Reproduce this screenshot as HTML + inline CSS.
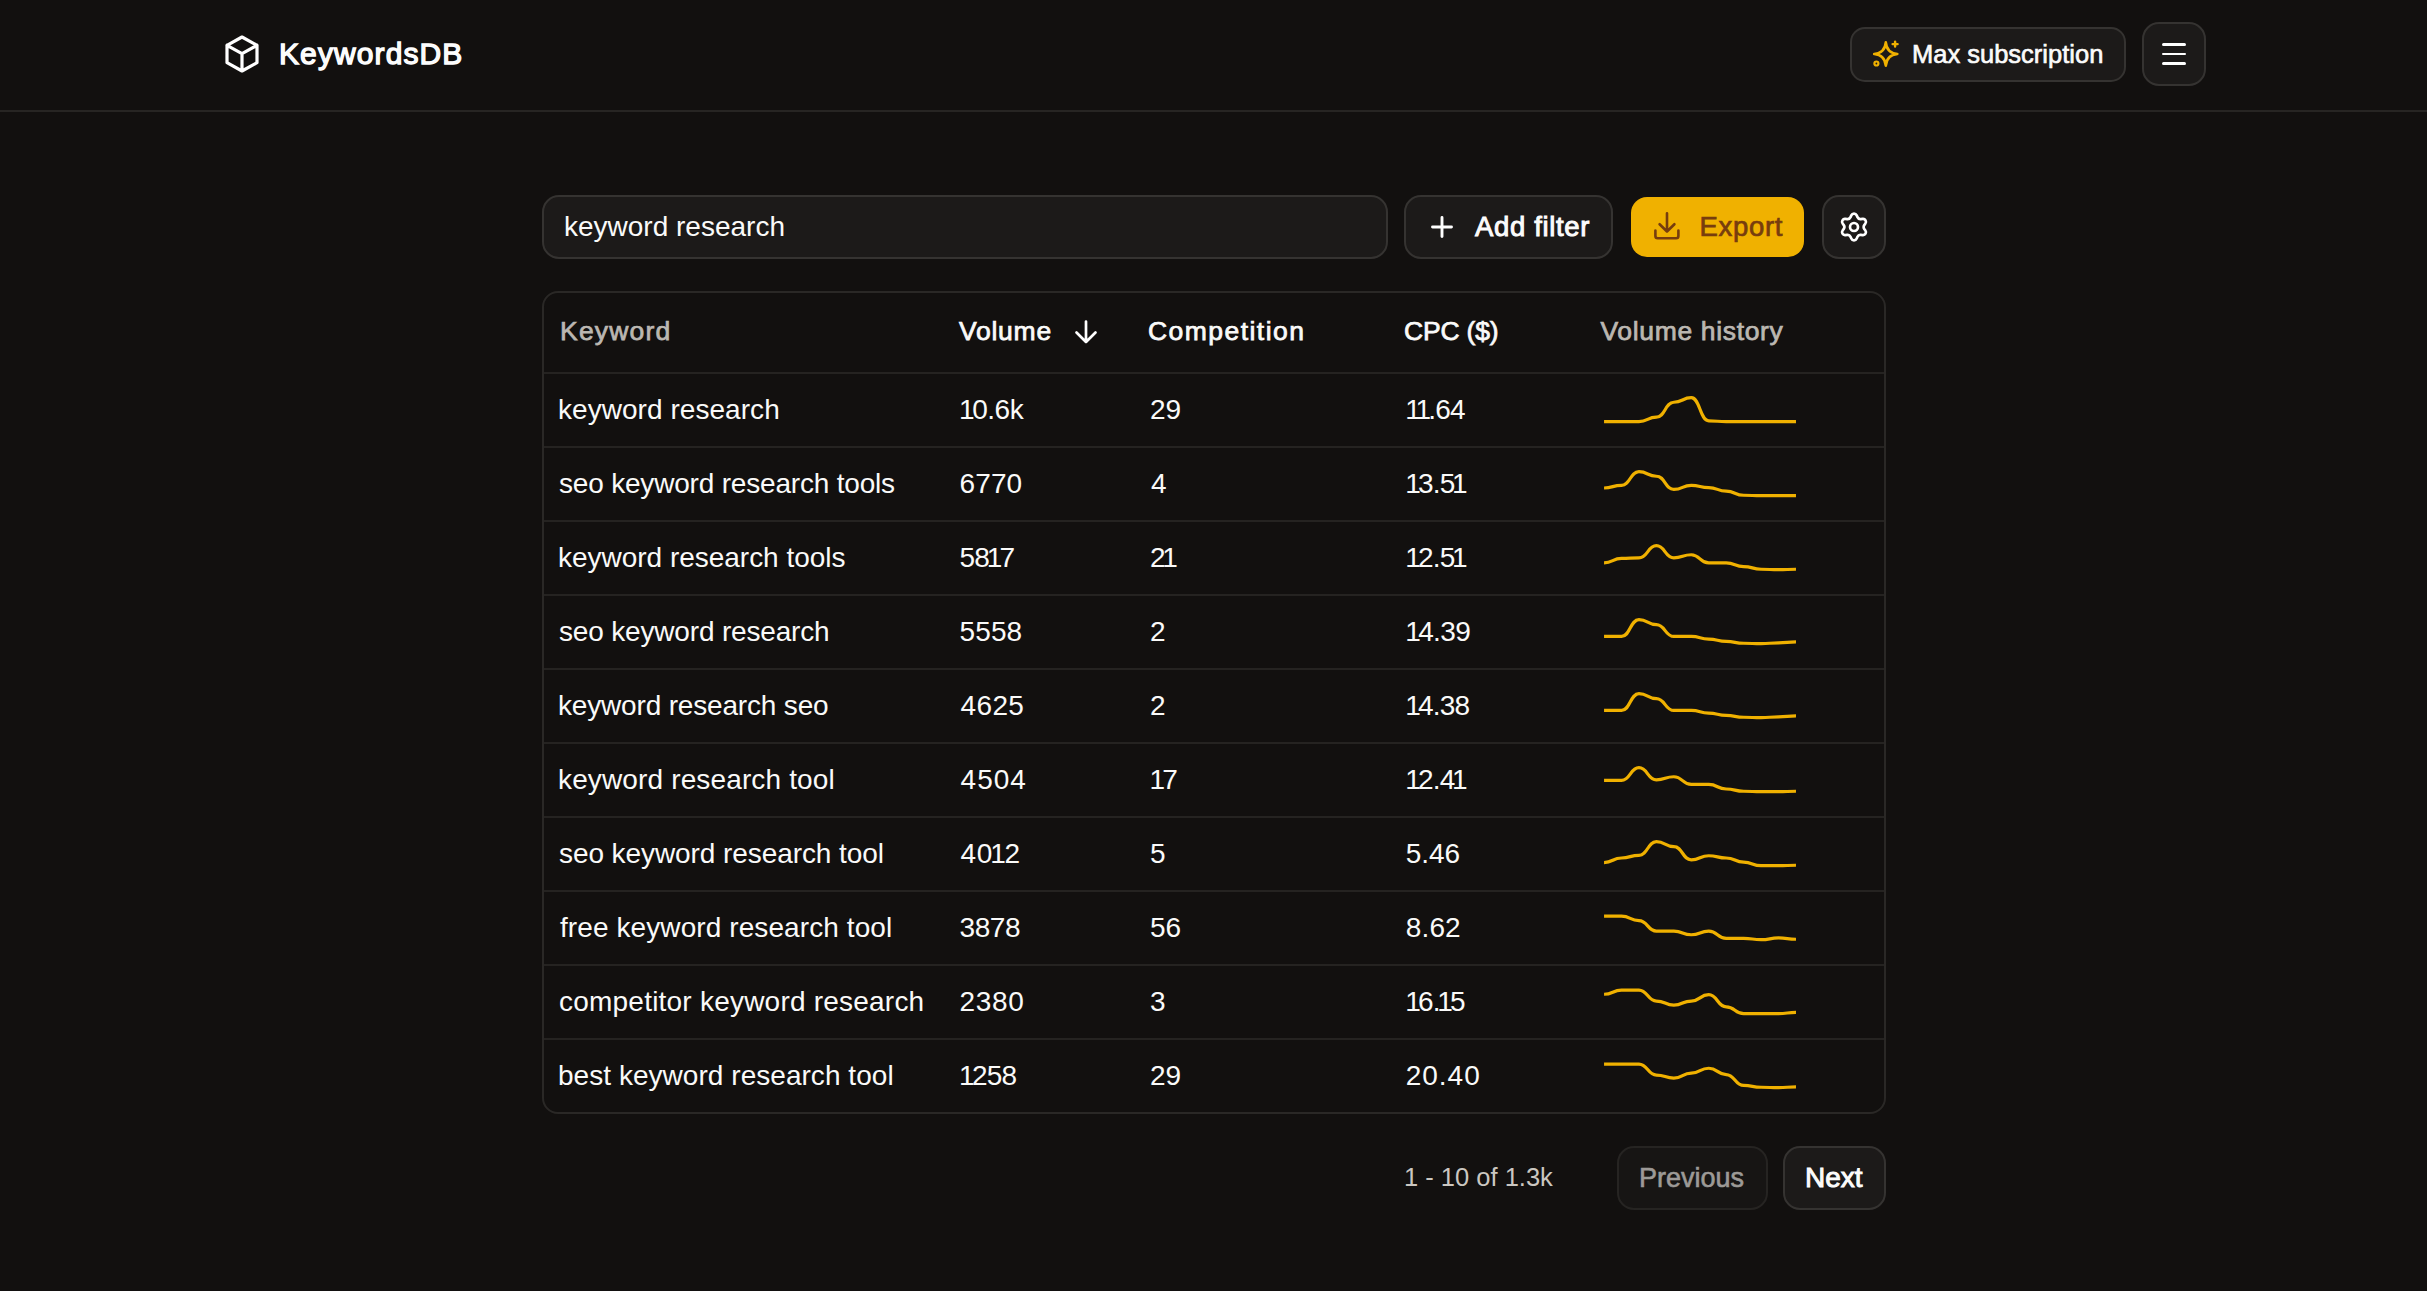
<!DOCTYPE html>
<html><head><meta charset="utf-8"><style>
*{box-sizing:border-box;margin:0;padding:0}
html,body{width:2427px;height:1291px;overflow:hidden;background:#12100f;}
body{font-family:"Liberation Sans",sans-serif;color:#fafaf9;position:relative}
.a{position:absolute;white-space:nowrap}
.btn{position:absolute;background:#1c1a19;border:2px solid #353331;border-radius:16px}
.hdr{font-size:26.5px;line-height:1;-webkit-text-stroke:0.75px currentColor}
.cell{font-size:28px;line-height:1}
.rowline{position:absolute;left:544px;width:1340px;height:2px;background:#252321}
</style></head><body>
<div class="a" style="left:0;top:110px;width:2427px;height:2px;background:#272523"></div>
<svg class="a" style="left:222px;top:33px" width="40" height="42" viewBox="0 0 40 42">
 <path d="M20 4 L35 12.3 V29.7 L20 38 L5 29.7 V12.3 Z M5 12.3 L20 20.6 L35 12.3 M20 20.6 V38" fill="none" stroke="#fff" stroke-width="3.2" stroke-linejoin="round" stroke-linecap="round"/>
</svg>
<div class="a" style="left:279px;top:38.5px;font-size:30px;line-height:1;letter-spacing:1.1px;-webkit-text-stroke:1.3px #fff">KeywordsDB</div>

<div class="btn" style="left:1850px;top:27px;width:276px;height:55px;border-radius:15px"></div>
<svg class="a" style="left:1870px;top:38px" width="32" height="32" viewBox="0 0 32 32">
 <path d="M15.8,4.4 C16.400000000000002,11.36 20.44,15.4 27.4,16.0 C20.44,16.6 16.400000000000002,20.64 15.8,27.6 C15.200000000000001,20.64 11.16,16.6 4.200000000000001,16.0 C11.16,15.4 15.200000000000001,11.36 15.8,4.4 Z" fill="none" stroke="#f0b100" stroke-width="2.6" stroke-linejoin="round"/>
 <path d="M25.1 3.6 V8.6 M22.6 6.1 H27.6" stroke="#f0b100" stroke-width="2.4" stroke-linecap="round"/>
 <circle cx="6.4" cy="25.5" r="2.0" fill="none" stroke="#f0b100" stroke-width="2.2"/>
</svg>
<div class="a" style="left:1912px;top:42px;font-size:25.5px;line-height:1;-webkit-text-stroke:0.6px #fff">Max subscription</div>

<div class="btn" style="left:2142px;top:22px;width:64px;height:64px;border-radius:17px"></div>
<div class="a" style="left:2162px;top:43px;width:24px;height:2.8px;background:#fff;border-radius:2px"></div>
<div class="a" style="left:2162px;top:52.5px;width:24px;height:2.8px;background:#fff;border-radius:2px"></div>
<div class="a" style="left:2162px;top:62px;width:24px;height:2.8px;background:#fff;border-radius:2px"></div>

<div class="btn" style="left:542px;top:195px;width:846px;height:64px;border-radius:17px"></div>
<div class="a" style="left:564px;top:213px;font-size:28px;line-height:1">keyword research</div>

<div class="btn" style="left:1404px;top:195px;width:209px;height:64px;border-radius:17px"></div>
<svg class="a" style="left:1430px;top:215px" width="24" height="24" viewBox="0 0 24 24"><path d="M12 2.5 V21.5 M2.5 12 H21.5" stroke="#fff" stroke-width="2.9" stroke-linecap="round"/></svg>
<div class="a" style="left:1475px;top:213px;font-size:27.5px;line-height:1;letter-spacing:0.65px;-webkit-text-stroke:0.9px #fff">Add filter</div>

<div class="a" style="left:1631px;top:197px;width:173px;height:60px;border-radius:16px;background:#f0b100"></div>
<svg class="a" style="left:1652px;top:211px" width="30" height="32" viewBox="0 0 30 32">
 <path d="M15 2.2 V20.5 M7.6 13.2 L15 20.5 L22.4 13.2 M3.4 19.6 V25 Q3.4 27.3 5.7 27.3 H24.1 Q26.4 27.3 26.4 25 V19.6" fill="none" stroke="#763d0e" stroke-width="2.6" stroke-linecap="round" stroke-linejoin="round"/>
</svg>
<div class="a" style="left:1699.5px;top:212.5px;font-size:27.5px;line-height:1;letter-spacing:0.7px;color:#773d0e;-webkit-text-stroke:0.7px #773d0e">Export</div>

<div class="btn" style="left:1822px;top:195px;width:64px;height:64px;border-radius:17px"></div>
<svg class="a" style="left:1838px;top:211px" width="32" height="32" viewBox="0 0 24 24">
 <path d="M9.395 19.371l.585 1.315a2.213 2.213 0 0 0 4.044 0l.585-1.315a2.426 2.426 0 0 1 2.47-1.423l1.43.152a2.212 2.212 0 0 0 2.022-3.502l-.847-1.164a2.428 2.428 0 0 1-.46-1.434c0-.513.163-1.014.465-1.429l.847-1.163a2.212 2.212 0 0 0-2.023-3.502l-1.43.152a2.433 2.433 0 0 1-2.47-1.44l-.59-1.315a2.212 2.212 0 0 0-4.044 0l-.585 1.315a2.433 2.433 0 0 1-2.47 1.44l-1.434-.152a2.212 2.212 0 0 0-2.023 3.502l.847 1.163a2.43 2.43 0 0 1 0 2.858l-.847 1.163a2.212 2.212 0 0 0 2.023 3.502l1.43-.152a2.434 2.434 0 0 1 2.48 1.44Z" fill="none" stroke="#fff" stroke-width="2" stroke-linejoin="round"/>
 <circle cx="12" cy="12" r="3" fill="none" stroke="#fff" stroke-width="2"/>
</svg>

<div class="a" style="left:542px;top:291px;width:1344px;height:823px;border:2px solid #2a2826;border-radius:16px"></div>
<div class="hdr a" style="left:560px;top:318px;color:#bbb7b1;letter-spacing:1.2px">Keyword</div>
<div class="hdr a" style="left:959px;top:318px;letter-spacing:0.75px">Volume</div>
<svg class="a" style="left:1073px;top:319px" width="26" height="26" viewBox="0 0 26 26"><path d="M13 2.5 V23 M3.5 13.5 L13 23 L22.5 13.5" fill="none" stroke="#fff" stroke-width="2.7" stroke-linecap="round" stroke-linejoin="round"/></svg>
<div class="hdr a" style="left:1148px;top:318px;letter-spacing:1.45px">Competition</div>
<div class="hdr a" style="left:1404px;top:318px;letter-spacing:-0.2px">CPC ($)</div>
<div class="hdr a" style="left:1600.5px;top:318px;color:#bbb7b1;letter-spacing:0.65px">Volume history</div>

<div class="rowline" style="top:372px"></div>
<div class="cell a" style="left:558px;top:396px;letter-spacing:0.05px">keyword research</div>
<div class="cell a" style="left:961.6px;top:396px;letter-spacing:-0.47px"><span style='margin:0 -2px 0 -2.5px'>1</span>0.6k</div>
<div class="cell a" style="left:1149.9px;top:396px;letter-spacing:0.0px">29</div>
<div class="cell a" style="left:1407.7px;top:396px;letter-spacing:-0.8px"><span style='margin:0 -2px 0 -2.5px'>1</span><span style='margin:0 -2px 0 -2.5px'>1</span>.64</div>
<div class="rowline" style="top:446px"></div>
<div class="cell a" style="left:559px;top:470px;letter-spacing:-0.19px">seo keyword research tools</div>
<div class="cell a" style="left:959.6px;top:470px;letter-spacing:0.1px">6770</div>
<div class="cell a" style="left:1150.9px;top:470px;letter-spacing:0.0px">4</div>
<div class="cell a" style="left:1407.7px;top:470px;letter-spacing:-0.8px"><span style='margin:0 -2px 0 -2.5px'>1</span>3.5<span style='margin:0 -2px 0 -2.5px'>1</span></div>
<div class="rowline" style="top:520px"></div>
<div class="cell a" style="left:558px;top:544px;letter-spacing:-0.02px">keyword research tools</div>
<div class="cell a" style="left:959.6px;top:544px;letter-spacing:-0.8px">58<span style='margin:0 -2px 0 -2.5px'>1</span>7</div>
<div class="cell a" style="left:1149.9px;top:544px;letter-spacing:-0.8px">2<span style='margin:0 -2px 0 -2.5px'>1</span></div>
<div class="cell a" style="left:1407.7px;top:544px;letter-spacing:-0.8px"><span style='margin:0 -2px 0 -2.5px'>1</span>2.5<span style='margin:0 -2px 0 -2.5px'>1</span></div>
<div class="rowline" style="top:594px"></div>
<div class="cell a" style="left:559px;top:618px;letter-spacing:-0.17px">seo keyword research</div>
<div class="cell a" style="left:959.6px;top:618px;letter-spacing:0.1px">5558</div>
<div class="cell a" style="left:1149.9px;top:618px;letter-spacing:0.0px">2</div>
<div class="cell a" style="left:1407.7px;top:618px;letter-spacing:-0.62px"><span style='margin:0 -2px 0 -2.5px'>1</span>4.39</div>
<div class="rowline" style="top:668px"></div>
<div class="cell a" style="left:558px;top:692px;letter-spacing:-0.17px">keyword research seo</div>
<div class="cell a" style="left:960.6px;top:692px;letter-spacing:0.33px">4625</div>
<div class="cell a" style="left:1149.9px;top:692px;letter-spacing:0.0px">2</div>
<div class="cell a" style="left:1407.7px;top:692px;letter-spacing:-0.8px"><span style='margin:0 -2px 0 -2.5px'>1</span>4.38</div>
<div class="rowline" style="top:742px"></div>
<div class="cell a" style="left:558px;top:766px;letter-spacing:0.14px">keyword research tool</div>
<div class="cell a" style="left:960.6px;top:766px;letter-spacing:1.0px">4504</div>
<div class="cell a" style="left:1151.9px;top:766px;letter-spacing:-0.8px"><span style='margin:0 -2px 0 -2.5px'>1</span>7</div>
<div class="cell a" style="left:1407.7px;top:766px;letter-spacing:-0.8px"><span style='margin:0 -2px 0 -2.5px'>1</span>2.4<span style='margin:0 -2px 0 -2.5px'>1</span></div>
<div class="rowline" style="top:816px"></div>
<div class="cell a" style="left:559px;top:840px;letter-spacing:-0.08px">seo keyword research tool</div>
<div class="cell a" style="left:960.6px;top:840px;letter-spacing:0.53px">40<span style='margin:0 -2px 0 -2.5px'>1</span>2</div>
<div class="cell a" style="left:1149.9px;top:840px;letter-spacing:0.0px">5</div>
<div class="cell a" style="left:1405.7px;top:840px;letter-spacing:0.0px">5.46</div>
<div class="rowline" style="top:890px"></div>
<div class="cell a" style="left:560px;top:914px;letter-spacing:0.09px">free keyword research tool</div>
<div class="cell a" style="left:959.6px;top:914px;letter-spacing:-0.47px">3878</div>
<div class="cell a" style="left:1149.9px;top:914px;letter-spacing:0.0px">56</div>
<div class="cell a" style="left:1405.7px;top:914px;letter-spacing:0.17px">8.62</div>
<div class="rowline" style="top:964px"></div>
<div class="cell a" style="left:559px;top:988px;letter-spacing:0.22px">competitor keyword research</div>
<div class="cell a" style="left:959.6px;top:988px;letter-spacing:0.67px">2380</div>
<div class="cell a" style="left:1149.9px;top:988px;letter-spacing:0.0px">3</div>
<div class="cell a" style="left:1407.7px;top:988px;letter-spacing:-0.8px"><span style='margin:0 -2px 0 -2.5px'>1</span>6.<span style='margin:0 -2px 0 -2.5px'>1</span>5</div>
<div class="rowline" style="top:1038px"></div>
<div class="cell a" style="left:558px;top:1062px;letter-spacing:0.04px">best keyword research tool</div>
<div class="cell a" style="left:961.6px;top:1062px;letter-spacing:-0.8px"><span style='margin:0 -2px 0 -2.5px'>1</span>258</div>
<div class="cell a" style="left:1149.9px;top:1062px;letter-spacing:0.0px">29</div>
<div class="cell a" style="left:1405.7px;top:1062px;letter-spacing:1.0px">20.40</div>
<svg class="a" style="left:0;top:0" width="2427" height="1291">
<path d="M1604.05,421.72C1612.77,421.72 1612.77,421.72 1621.50,421.72C1630.22,421.72 1630.22,421.72 1638.95,421.72C1647.67,421.72 1647.67,417.18 1656.39,417.18C1665.12,417.18 1665.12,402.23 1673.84,402.23C1682.57,402.23 1682.57,397.69 1691.29,397.69C1700.01,397.69 1700.01,420.81 1708.74,420.81C1717.46,420.81 1717.46,421.72 1726.19,421.72C1734.91,421.72 1734.91,421.72 1743.64,421.72C1752.36,421.72 1752.36,421.72 1761.08,421.72C1769.81,421.72 1769.81,421.72 1778.53,421.72C1787.26,421.72 1787.26,421.72 1795.98,421.72" fill="none" stroke="#f0b100" stroke-width="3.2" stroke-linecap="butt" stroke-linejoin="round"/>
<path d="M1604.05,488.01C1612.77,488.01 1612.77,485.29 1621.50,485.29C1630.22,485.29 1630.22,471.69 1638.95,471.69C1647.67,471.69 1647.67,476.23 1656.39,476.23C1665.12,476.23 1665.12,489.37 1673.84,489.37C1682.57,489.37 1682.57,485.29 1691.29,485.29C1700.01,485.29 1700.01,487.56 1708.74,487.56C1717.46,487.56 1717.46,491.18 1726.19,491.18C1734.91,491.18 1734.91,495.26 1743.64,495.26C1752.36,495.26 1752.36,495.72 1761.08,495.72C1769.81,495.72 1769.81,495.72 1778.53,495.72C1787.26,495.72 1787.26,495.72 1795.98,495.72" fill="none" stroke="#f0b100" stroke-width="3.2" stroke-linecap="butt" stroke-linejoin="round"/>
<path d="M1604.05,562.92C1612.77,562.92 1612.77,558.39 1621.50,558.39C1630.22,558.39 1630.22,557.93 1638.95,557.93C1647.67,557.93 1647.67,545.69 1656.39,545.69C1665.12,545.69 1665.12,557.93 1673.84,557.93C1682.57,557.93 1682.57,554.76 1691.29,554.76C1700.01,554.76 1700.01,562.92 1708.74,562.92C1717.46,562.92 1717.46,562.92 1726.19,562.92C1734.91,562.92 1734.91,566.54 1743.64,566.54C1752.36,566.54 1752.36,569.26 1761.08,569.26C1769.81,569.26 1769.81,569.72 1778.53,569.72C1787.26,569.72 1787.26,569.26 1795.98,569.26" fill="none" stroke="#f0b100" stroke-width="3.2" stroke-linecap="butt" stroke-linejoin="round"/>
<path d="M1604.05,636.47C1612.77,636.47 1612.77,636.47 1621.50,636.47C1630.22,636.47 1630.22,619.69 1638.95,619.69C1647.67,619.69 1647.67,624.68 1656.39,624.68C1665.12,624.68 1665.12,636.47 1673.84,636.47C1682.57,636.47 1682.57,636.47 1691.29,636.47C1700.01,636.47 1700.01,639.18 1708.74,639.18C1717.46,639.18 1717.46,641.45 1726.19,641.45C1734.91,641.45 1734.91,643.26 1743.64,643.26C1752.36,643.26 1752.36,643.72 1761.08,643.72C1769.81,643.72 1769.81,642.81 1778.53,642.81C1787.26,642.81 1787.26,641.90 1795.98,641.90" fill="none" stroke="#f0b100" stroke-width="3.2" stroke-linecap="butt" stroke-linejoin="round"/>
<path d="M1604.05,710.47C1612.77,710.47 1612.77,710.47 1621.50,710.47C1630.22,710.47 1630.22,693.69 1638.95,693.69C1647.67,693.69 1647.67,698.68 1656.39,698.68C1665.12,698.68 1665.12,710.47 1673.84,710.47C1682.57,710.47 1682.57,710.47 1691.29,710.47C1700.01,710.47 1700.01,713.18 1708.74,713.18C1717.46,713.18 1717.46,715.45 1726.19,715.45C1734.91,715.45 1734.91,717.26 1743.64,717.26C1752.36,717.26 1752.36,717.72 1761.08,717.72C1769.81,717.72 1769.81,716.81 1778.53,716.81C1787.26,716.81 1787.26,715.90 1795.98,715.90" fill="none" stroke="#f0b100" stroke-width="3.2" stroke-linecap="butt" stroke-linejoin="round"/>
<path d="M1604.05,780.39C1612.77,780.39 1612.77,780.39 1621.50,780.39C1630.22,780.39 1630.22,767.69 1638.95,767.69C1647.67,767.69 1647.67,779.93 1656.39,779.93C1665.12,779.93 1665.12,776.76 1673.84,776.76C1682.57,776.76 1682.57,784.47 1691.29,784.47C1700.01,784.47 1700.01,784.47 1708.74,784.47C1717.46,784.47 1717.46,789.00 1726.19,789.00C1734.91,789.00 1734.91,791.26 1743.64,791.26C1752.36,791.26 1752.36,791.72 1761.08,791.72C1769.81,791.72 1769.81,791.72 1778.53,791.72C1787.26,791.72 1787.26,791.26 1795.98,791.26" fill="none" stroke="#f0b100" stroke-width="3.2" stroke-linecap="butt" stroke-linejoin="round"/>
<path d="M1604.05,862.54C1612.77,862.54 1612.77,858.01 1621.50,858.01C1630.22,858.01 1630.22,855.29 1638.95,855.29C1647.67,855.29 1647.67,841.69 1656.39,841.69C1665.12,841.69 1665.12,846.68 1673.84,846.68C1682.57,846.68 1682.57,859.83 1691.29,859.83C1700.01,859.83 1700.01,855.75 1708.74,855.75C1717.46,855.75 1717.46,858.01 1726.19,858.01C1734.91,858.01 1734.91,862.09 1743.64,862.09C1752.36,862.09 1752.36,865.72 1761.08,865.72C1769.81,865.72 1769.81,865.72 1778.53,865.72C1787.26,865.72 1787.26,865.26 1795.98,865.26" fill="none" stroke="#f0b100" stroke-width="3.2" stroke-linecap="butt" stroke-linejoin="round"/>
<path d="M1604.05,916.15C1612.77,916.15 1612.77,916.15 1621.50,916.15C1630.22,916.15 1630.22,920.68 1638.95,920.68C1647.67,920.68 1647.67,931.11 1656.39,931.11C1665.12,931.11 1665.12,931.11 1673.84,931.11C1682.57,931.11 1682.57,934.73 1691.29,934.73C1700.01,934.73 1700.01,931.11 1708.74,931.11C1717.46,931.11 1717.46,938.36 1726.19,938.36C1734.91,938.36 1734.91,938.36 1743.64,938.36C1752.36,938.36 1752.36,939.72 1761.08,939.72C1769.81,939.72 1769.81,937.90 1778.53,937.90C1787.26,937.90 1787.26,939.26 1795.98,939.26" fill="none" stroke="#f0b100" stroke-width="3.2" stroke-linecap="butt" stroke-linejoin="round"/>
<path d="M1604.05,994.23C1612.77,994.23 1612.77,990.15 1621.50,990.15C1630.22,990.15 1630.22,990.15 1638.95,990.15C1647.67,990.15 1647.67,1001.03 1656.39,1001.03C1665.12,1001.03 1665.12,1005.11 1673.84,1005.11C1682.57,1005.11 1682.57,1001.03 1691.29,1001.03C1700.01,1001.03 1700.01,994.68 1708.74,994.68C1717.46,994.68 1717.46,1006.92 1726.19,1006.92C1734.91,1006.92 1734.91,1013.72 1743.64,1013.72C1752.36,1013.72 1752.36,1013.72 1761.08,1013.72C1769.81,1013.72 1769.81,1013.72 1778.53,1013.72C1787.26,1013.72 1787.26,1012.36 1795.98,1012.36" fill="none" stroke="#f0b100" stroke-width="3.2" stroke-linecap="butt" stroke-linejoin="round"/>
<path d="M1604.05,1064.15C1612.77,1064.15 1612.77,1064.15 1621.50,1064.15C1630.22,1064.15 1630.22,1064.15 1638.95,1064.15C1647.67,1064.15 1647.67,1075.03 1656.39,1075.03C1665.12,1075.03 1665.12,1078.20 1673.84,1078.20C1682.57,1078.20 1682.57,1073.21 1691.29,1073.21C1700.01,1073.21 1700.01,1068.23 1708.74,1068.23C1717.46,1068.23 1717.46,1074.57 1726.19,1074.57C1734.91,1074.57 1734.91,1085.45 1743.64,1085.45C1752.36,1085.45 1752.36,1087.26 1761.08,1087.26C1769.81,1087.26 1769.81,1087.72 1778.53,1087.72C1787.26,1087.72 1787.26,1086.81 1795.98,1086.81" fill="none" stroke="#f0b100" stroke-width="3.2" stroke-linecap="butt" stroke-linejoin="round"/>
</svg>

<div class="a" style="left:1404px;top:1165px;font-size:25.5px;line-height:1;color:#cbc7c1">1 - 10 of 1.3k</div>
<div class="btn" style="left:1617px;top:1146px;width:151px;height:64px;border-radius:17px;border-color:#262422;background:#171514"></div>
<div class="a" style="left:1639px;top:1165px;font-size:27px;line-height:1;color:#9d9a97;-webkit-text-stroke:0.6px #9d9a97">Previous</div>
<div class="btn" style="left:1783px;top:1146px;width:103px;height:64px;border-radius:17px"></div>
<div class="a" style="left:1805px;top:1164px;font-size:28px;line-height:1;-webkit-text-stroke:0.9px #fff">Next</div>
</body></html>
